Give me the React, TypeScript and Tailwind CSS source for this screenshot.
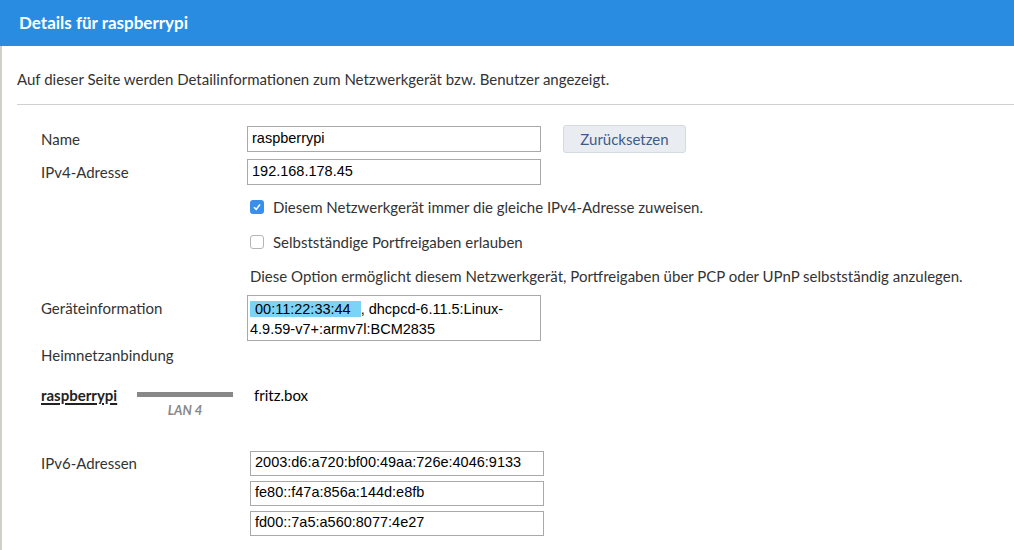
import React from "react";

const ui = { fontFamily: "Lato, 'Open Sans', sans-serif" };
const inp = { fontFamily: "'Liberation Sans', Arial, sans-serif" };

function Field({ value, h = "h-[26px]" }: { value: string; h?: string }) {
  return (
    <div
      style={inp}
      className={`w-[294px] ${h} flex items-center border border-[#a9a9a9] bg-white px-[4px] text-[14.5px] text-black`}
    >
      {value}
    </div>
  );
}

function Check({ checked, label }: { checked: boolean; label: string }) {
  return (
    <div className="flex items-center gap-[9px] pl-[3px]">
      {checked ? (
        <span className="flex h-[14px] w-[14px] items-center justify-center rounded-[3px] bg-[#3b8fe8]">
          <svg width="10" height="10" viewBox="0 0 10 10">
            <path d="M2 5.2 L4.2 7.4 L8 2.6" fill="none" stroke="white" strokeWidth="1.6" />
          </svg>
        </span>
      ) : (
        <span className="h-[14px] w-[14px] rounded-[3px] border border-[#b5b5b5] bg-white" />
      )}
      <span>{label}</span>
    </div>
  );
}

export default function App() {
  return (
    <div style={ui} className="h-[550px] w-[1014px] overflow-hidden bg-white text-[15px] text-[#333]">
      <div className="flex h-[46px] items-center bg-[#2a8ce0] pl-[19px] text-[17px] font-bold text-white">
        Details für raspberrypi
      </div>
      <div className="h-[504px] border-l-2 border-[#cfcfc8] pl-[15px]">
        <div className="flex h-[58px] items-center pt-[8px]">
          Auf dieser Seite werden Detailinformationen zum Netzwerkgerät bzw. Benutzer angezeigt.
        </div>
        <div className="h-px bg-[#d0d0d0]" />
        <div className="grid grid-cols-[206px_1fr] pl-[24px] pt-[20px]">
          <div className="flex h-[28px] items-center">Name</div>
          <div className="flex items-center gap-[22px]">
            <Field value="raspberrypi" />
            <button className="h-[28px] w-[123px] rounded-[3px] border border-[#d4dae2] bg-[#e9edf2] text-[15px] text-[#3d5a8c]">
              Zurücksetzen
            </button>
          </div>
          <div className="mt-[6px] flex h-[26px] items-center">IPv4-Adresse</div>
          <div className="mt-[6px]">
            <Field value="192.168.178.45" />
          </div>
          <div />
          <div className="mt-[11px] flex flex-col">
            <div className="flex h-[22px] items-center">
              <Check checked label="Diesem Netzwerkgerät immer die gleiche IPv4-Adresse zuweisen." />
            </div>
            <div className="mt-[13px] flex h-[22px] items-center">
              <Check checked={false} label="Selbstständige Portfreigaben erlauben" />
            </div>
            <div className="mt-[12px] flex h-[22px] items-center pl-[3px]">
              Diese Option ermöglicht diesem Netzwerkgerät, Portfreigaben über PCP oder UPnP selbstständig anzulegen.
            </div>
          </div>
          <div className="mt-[9px] pt-[1px]">Geräteinformation</div>
          <div className="mt-[8px]">
            <div
              style={inp}
              className="h-[46px] w-[294px] border border-[#a9a9a9] bg-white px-[2px] pt-[3px] text-[14.5px] leading-[20px] text-black"
            >
              <span className="bg-[#7dd3f5] pl-[5px] pr-[10px]">00:11:22:33:44</span>, dhcpcd-6.11.5:Linux-4.9.59-v7+:armv7l:BCM2835
            </div>
          </div>
          <div className="col-span-2 mt-[3px] flex h-[22px] items-center">Heimnetzanbindung</div>
          <div className="col-span-2 mt-[10px] flex items-start">
            <div className="w-[96px] pt-[8px] font-bold text-[#222] underline decoration-[1.5px] underline-offset-2">raspberrypi</div>
            <div className="w-[117px]">
              <div className="flex w-[96px] flex-col items-center">
                <div className="mt-[16px] h-[5px] w-[96px] bg-[#888]" />
                <div className="mt-[4px] text-[13px] font-bold italic text-[#888]">LAN 4</div>
              </div>
            </div>
            <div className="pt-[8px] text-black">fritz.box</div>
          </div>
          <div className="mt-[29px] pt-[2px]">IPv6-Adressen</div>
          <div className="mt-[30px] flex flex-col gap-[5px] pl-[3px]">
            <Field value="2003:d6:a720:bf00:49aa:726e:4046:9133" h="h-[25px]" />
            <Field value="fe80::f47a:856a:144d:e8fb" h="h-[25px]" />
            <Field value="fd00::7a5:a560:8077:4e27" h="h-[25px]" />
          </div>
        </div>
      </div>
    </div>
  );
}
